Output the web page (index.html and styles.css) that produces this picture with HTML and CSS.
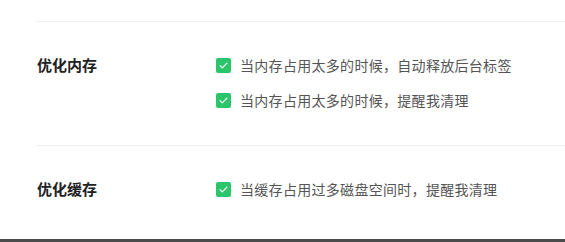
FILE: index.html
```html
<!DOCTYPE html>
<html lang="zh-CN">
<head>
    <meta charset="UTF-8">
    <meta name="viewport" content="width=device-width, initial-scale=1.0">
    <title>设置</title>
    <link rel="stylesheet" href="styles.css">
</head>
<body>
    <div class="page">
        <div class="settings">
            <div class="section">
                <div class="label">优化内存</div>
                <div class="options">
                    <label class="option"><span class="check"><svg viewBox="0 0 16 16" width="11" height="11"><path d="M3 8.2l3.2 3.2L13 4.6" fill="none" stroke="#fff" stroke-width="1.8" stroke-linecap="round" stroke-linejoin="round"/></svg></span>当内存占用太多的时候，自动释放后台标签</label>
                    <label class="option"><span class="check"><svg viewBox="0 0 16 16" width="11" height="11"><path d="M3 8.2l3.2 3.2L13 4.6" fill="none" stroke="#fff" stroke-width="1.8" stroke-linecap="round" stroke-linejoin="round"/></svg></span>当内存占用太多的时候，提醒我清理</label>
                </div>
            </div>
            <div class="section">
                <div class="label">优化缓存</div>
                <div class="options">
                    <label class="option"><span class="check"><svg viewBox="0 0 16 16" width="11" height="11"><path d="M3 8.2l3.2 3.2L13 4.6" fill="none" stroke="#fff" stroke-width="1.8" stroke-linecap="round" stroke-linejoin="round"/></svg></span>当缓存占用过多磁盘空间时，提醒我清理</label>
                </div>
            </div>
        </div>
        <div class="bottom-bar"></div>
    </div>
</body>
</html>
```

FILE: styles.css
```css
body {
    margin: 0;
    background-color: #fff;
    font-family: "Noto Sans CJK SC", "Noto Sans", sans-serif;
}
.page {
    height: 100vh;
    display: flex;
    flex-direction: column;
}
.settings {
    flex: 1;
    padding: 21px 0 0 36px;
}
.section {
    display: flex;
    border-top: 1px solid #f0f0f0;
    padding: 27px 0 29px;
}
.label {
    width: 180px;
    height: 32px;
    line-height: 32px;
    font-size: 15px;
    font-weight: bold;
    color: #222;
    padding-left: 1px;
    box-sizing: border-box;
}
.options {
    display: flex;
    flex-direction: column;
    gap: 3px;
}
.option {
    display: flex;
    align-items: center;
    height: 32px;
    font-size: 14px;
    letter-spacing: 0.3px;
    color: #555;
}
.check {
    width: 15px;
    height: 15px;
    border-radius: 2px;
    background-color: #2bc56b;
    display: flex;
    align-items: center;
    justify-content: center;
    margin-right: 9px;
}
.bottom-bar {
    height: 3px;
    background-color: #4b4b4b;
}
```
